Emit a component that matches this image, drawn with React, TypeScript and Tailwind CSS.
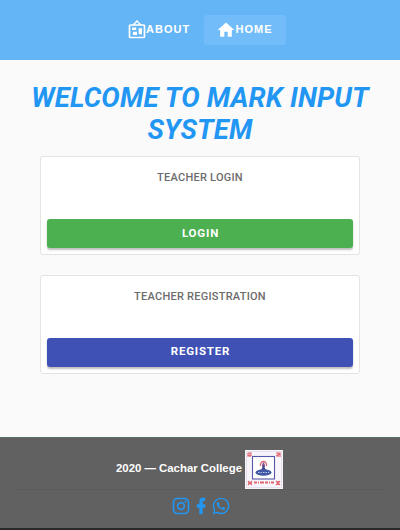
const ICONS = {
  board:
    'M12.04,2.5L9.53,5H14.53L12.04,2.5M4,7V20H20V7H4M12,0L17,5V5H20A2,2 0 0,1 22,7V20A2,2 0 0,1 20,22H4A2,2 0 0,1 2,20V7A2,2 0 0,1 4,5H7V5L12,0M7,18V14H12V18H7M14,17V10H18V17H14M6,12V9H11V12H6Z',
  home: 'M10,20V14H14V20H19V12H22L12,3L2,12H5V20H10Z',
  instagram:
    'M7.8,2H16.2C19.4,2 22,4.6 22,7.8V16.2A5.8,5.8 0 0,1 16.2,22H7.8C4.6,22 2,19.4 2,16.2V7.8A5.8,5.8 0 0,1 7.8,2M7.6,4A3.6,3.6 0 0,0 4,7.6V16.4C4,18.39 5.61,20 7.6,20H16.4A3.6,3.6 0 0,0 20,16.4V7.6C20,5.61 18.39,4 16.4,4H7.6M17.25,5.5A1.25,1.25 0 0,1 18.5,6.75A1.25,1.25 0 0,1 17.25,8A1.25,1.25 0 0,1 16,6.75A1.25,1.25 0 0,1 17.25,5.5M12,7A5,5 0 0,1 17,12A5,5 0 0,1 12,17A5,5 0 0,1 7,12A5,5 0 0,1 12,7M12,9A3,3 0 0,0 9,12A3,3 0 0,0 12,15A3,3 0 0,0 15,12A3,3 0 0,0 12,9Z',
  facebook:
    'M17,2V2H17V6H15C14.31,6 14,6.81 14,7.5V10H14L17,10V14H14V22H10V14H7V10H10V6A4,4 0 0,1 14,2H17Z',
  whatsapp:
    'M12.04 2C6.58 2 2.13 6.45 2.13 11.91C2.13 13.66 2.59 15.36 3.45 16.86L2.05 22L7.3 20.62C8.75 21.41 10.38 21.83 12.04 21.83C17.5 21.83 21.95 17.38 21.95 11.92C21.95 9.27 20.92 6.78 19.05 4.91C17.18 3.03 14.69 2 12.04 2M12.05 3.67C14.25 3.67 16.31 4.53 17.87 6.09C19.42 7.65 20.28 9.72 20.28 11.92C20.28 16.46 16.58 20.15 12.04 20.15C10.56 20.15 9.11 19.76 7.85 19L7.55 18.83L4.43 19.65L5.26 16.61L5.06 16.29C4.24 15 3.8 13.47 3.8 11.91C3.81 7.37 7.5 3.67 12.05 3.67M8.53 7.33C8.37 7.33 8.1 7.39 7.87 7.64C7.65 7.89 7 8.5 7 9.71C7 10.93 7.89 12.1 8 12.27C8.14 12.44 9.76 14.94 12.25 16C12.84 16.27 13.3 16.42 13.66 16.53C14.25 16.72 14.79 16.69 15.22 16.63C15.7 16.56 16.68 16.03 16.89 15.45C17.1 14.87 17.1 14.38 17.04 14.27C16.97 14.17 16.81 14.11 16.56 14C16.31 13.86 15.09 13.26 14.87 13.18C14.64 13.1 14.5 13.06 14.31 13.3C14.15 13.55 13.67 14.11 13.53 14.27C13.38 14.44 13.24 14.46 13 14.34C12.74 14.21 11.94 13.95 11 13.11C10.26 12.45 9.77 11.64 9.62 11.39C9.5 11.15 9.61 11 9.73 10.89L10.1 10.45C10.23 10.31 10.27 10.2 10.35 10.04C10.43 9.87 10.39 9.73 10.33 9.61C10.27 9.5 9.77 8.26 9.56 7.77C9.36 7.29 9.16 7.35 9 7.34L8.53 7.33Z',
};

function Icon({ name }: { name: keyof typeof ICONS }) {
  return (
    <svg viewBox="0 0 24 24" className="size-5 shrink-0 fill-current">
      <path d={ICONS[name]} />
    </svg>
  );
}

function LoginCard({ title, action, color }: { title: string; action: string; color: string }) {
  return (
    <section className="flex h-[99px] flex-col justify-between rounded-[3px] border border-[#e3e3e3] bg-white px-1.5 pt-3 pb-1.5">
      <h2 className="text-center text-[11px] leading-[17px] font-medium tracking-[0.25px] text-[#6c6c6c]">{title}</h2>
      <button
        className={`h-[29px] rounded-[3px] pl-px text-center text-[11.5px] font-bold tracking-[0.8px] text-white shadow-[0_2px_2px_rgba(0,0,0,0.26)] ${color}`}
      >
        {action}
      </button>
    </section>
  );
}

function Crest() {
  return (
    <svg viewBox="0 0 38 39" className="h-[39px] w-[38px] shrink-0">
      <rect width="38" height="39" fill="#f7f4fa" />
      <rect x="1.5" y="1.5" width="35" height="36" fill="none" stroke="#e6dff0" />
      <rect x="7.5" y="6.5" width="22" height="22.5" fill="#fff" stroke="#5657a8" strokeWidth="1.1" />
      <g fill="none" stroke="#df6670" strokeWidth="1.2">
        <path d="M3 3h4M3 3v3l4-1M5 3v4M31 3h4v4M31 6l4-2M33 3v4M3 31l4 4M7 31l-4 4M3 33h4M31 31l4 4M35 31l-4 4M33 31v4" />
        <path d="M9 32.5h20" strokeDasharray="3 1 1 1 4 1" strokeWidth="1.8" />
        <path d="M15.5 16c-1-6 7-6 6 0" strokeWidth="1.3" />
      </g>
      <path d="M18.5 12c2 3 2 5 0 7c-2-2-2-4 0-7Z" fill="#7b4a93" />
      <path d="M16 20l2.5-4l2.5 4Z" fill="#39468f" />
      <ellipse cx="18.5" cy="22.5" rx="8" ry="3.3" fill="#4358a5" />
      <path d="M13 22.5h11" stroke="#b8c7e5" strokeDasharray="1.5 1" />
    </svg>
  );
}

export default function App() {
  return (
    <div className="flex h-[530px] w-[400px] flex-col overflow-hidden bg-[#fafafa] font-['Roboto',sans-serif]">
      <header className="flex h-[60px] items-center justify-center bg-[#64b5f6] pb-px pl-[11px] font-['Liberation_Sans',sans-serif] text-[11px] font-bold tracking-[1px] text-white">
        <a className="flex h-[30px] w-[78px] items-center pl-[1.5px]">
          <Icon name="board" />
          <span className="-ml-[0.5px]">ABOUT</span>
        </a>
        <a className="ml-[1px] flex h-[30px] w-[82px] items-center rounded-[3px] bg-[#72bcf9] pl-3">
          <Icon name="home" />
          <span className="-ml-[0.5px]">HOME</span>
        </a>
      </header>

      <main className="flex h-[377px] flex-col px-10 pt-[22px]">
        <h1 className="-mx-5 text-center text-[27.5px] leading-8 font-bold tracking-[0.18px] text-[#2196f3] italic">
          WELCOME TO MARK INPUT SYSTEM
        </h1>
        <div className="mt-[10px] flex flex-col gap-[19.5px]">
          <LoginCard title="TEACHER LOGIN" action="LOGIN" color="bg-[#4caf50]" />
          <LoginCard title="TEACHER REGISTRATION" action="REGISTER" color="bg-[#3f51b5]" />
        </div>
      </main>

      <footer className="flex h-[93px] flex-col border-t border-[#547069] border-b-2 border-b-[#292929] bg-[#616161]">
        <div className="flex h-[51px] items-center justify-center gap-[3px] pt-3 pr-px font-['Liberation_Sans',sans-serif] text-[11.4px] font-bold text-white">
          <span className="pb-0.5">2020 — Cachar College</span>
          <Crest />
        </div>
        <div className="mx-4 border-t border-[#5b5b5b]" />
        <div className="flex justify-center pt-[6px] pl-px text-[#2196f3]">
          <Icon name="instagram" />
          <Icon name="facebook" />
          <Icon name="whatsapp" />
        </div>
      </footer>
    </div>
  );
}
